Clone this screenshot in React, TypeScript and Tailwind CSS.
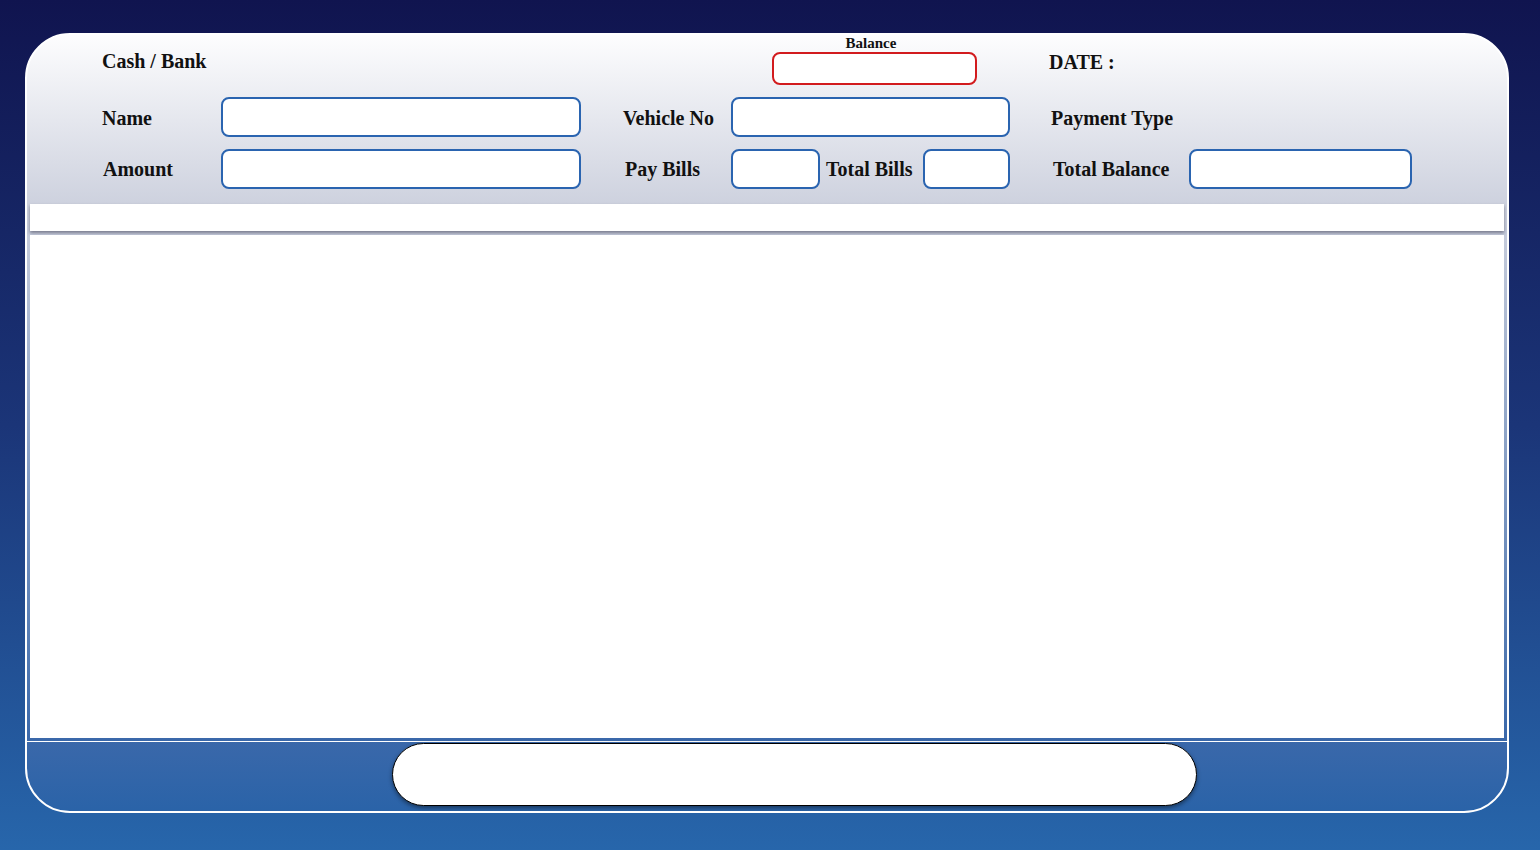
import React from "react";

const serif = "font-['Liberation_Serif','Times_New_Roman',serif]";

interface FieldProps {
  width: string;
  danger?: boolean;
}

// plain rounded text box used all over the header
const Field: React.FC<FieldProps> = ({ width, danger }) => {
  return (
    <input
      type="text"
      className={`${width} h-[40px] rounded-[8px] border-2 bg-white px-2 outline-none ${
        danger ? "border-[#d21b1e]" : "border-[#2a64b0]"
      }`}
    />
  );
};

const Label: React.FC<{ text: string; className?: string }> = ({ text, className }) => (
  <div className={`text-[20px] font-bold leading-[24px] text-[#111] ${className ?? ""}`}>{text}</div>
);

const App: React.FC = () => {
  return (
    <div className={`h-[850px] w-full overflow-hidden bg-gradient-to-b from-[#10144f] via-[#1b3578] to-[#2766ab] pt-[33px] ${serif}`}>
      <div className="ml-[25px] flex h-[780px] w-[1484px] flex-col rounded-[45px] border-2 border-white bg-[linear-gradient(to_bottom,#fdfdfe_0%,#cdd1de_22%,#3a68aa_91%,#2a63a8_100%)] overflow-hidden">
        {/* header form */}
        <div className="flex h-[168px] flex-col pl-[75px]">
          <div className="flex h-[56px] items-start">
            <Label text="Cash / Bank" className="mt-[14px] w-[521px]" />
            <div className="ml-[149px] flex w-[205px] flex-col items-center">
              <div className="h-[17px] pr-[7px] text-[15px] font-bold leading-[16px] text-[#111]">Balance</div>
              <input
                type="text"
                className="h-[33px] w-[205px] rounded-[8px] border-2 border-[#d21b1e] bg-white outline-none"
              />
            </div>
            <Label text="DATE :" className="ml-[72px] mt-[15px]" />
          </div>

          <div className="mt-[6px] flex h-[40px] items-center">
            <Label text="Name" className="w-[119px] pt-[1px]" />
            <Field width="w-[360px]" />
            <Label text="Vehicle No" className="ml-[42px] w-[108px] pt-[1px]" />
            <Field width="w-[279px]" />
            <Label text="Payment Type" className="ml-[41px] pt-[1px]" />
          </div>

          <div className="mt-[12px] flex h-[40px] items-center">
            <Label text="Amount" className="w-[119px] pl-[1px]" />
            <Field width="w-[360px]" />
            <Label text="Pay Bills" className="ml-[42px] w-[108px] pl-[2px]" />
            <Field width="w-[89px]" />
            <Label text="Total Bills" className="w-[103px] pl-[6px]" />
            <Field width="w-[87px]" />
            <Label text="Total Balance" className="ml-[41px] w-[138px] pl-[2px]" />
            <Field width="w-[223px]" />
          </div>
        </div>

        {/* column strip */}
        <div className="mx-[3px] mt-[1px] h-[27px] bg-white shadow-[0_2px_3px_rgba(60,60,80,0.55)]" />

        {/* list area */}
        <div className="mx-[3px] mt-[4px] h-[503px] bg-white" />

        {/* footer */}
        <div className="mt-[3px] flex-1 border-t border-white">
          <div className="ml-[365px] mt-[1px] h-[63px] w-[805px] rounded-full border border-black bg-white shadow-[0_2px_4px_rgba(0,0,0,0.45)]" />
        </div>
      </div>
    </div>
  );
};

export default App;
